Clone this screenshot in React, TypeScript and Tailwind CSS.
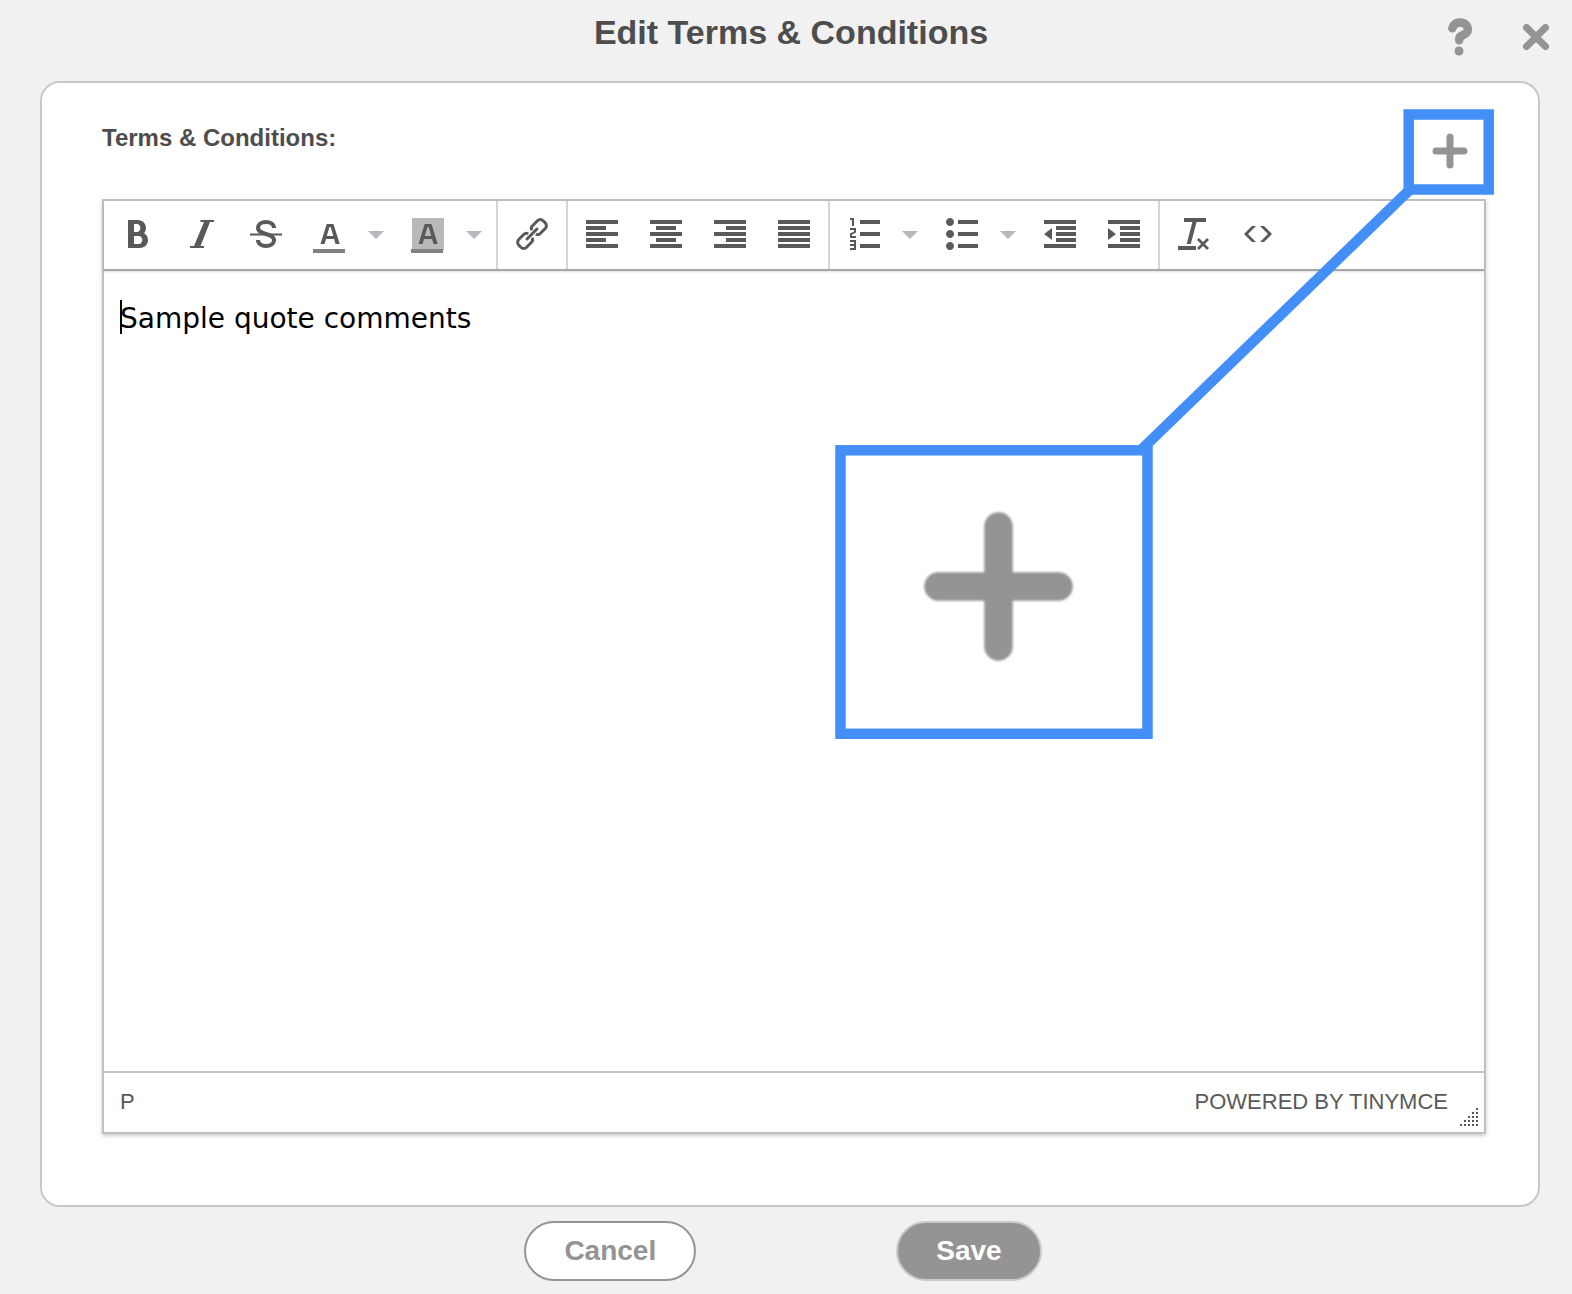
import type { ReactNode } from 'react';
import {
  ImBold,
  ImClearFormatting,
  ImIndentDecrease,
  ImIndentIncrease,
  ImList2,
  ImListNumbered,
  ImParagraphCenter,
  ImParagraphJustify,
  ImParagraphLeft,
  ImParagraphRight,
} from 'react-icons/im';

function ToolGroup({ children, last = false }: { children: ReactNode; last?: boolean }) {
  return (
    <div className={last ? 'flex px-0.5' : 'flex border-r-2 border-[#d4d4d4] px-0.5'}>{children}</div>
  );
}

function Tool({ label, children }: { label: string; children: ReactNode }) {
  return (
    <button
      type="button"
      aria-label={label}
      title={label}
      className="flex w-16 items-center justify-center pb-0.5 text-[32px] text-[#595959]"
    >
      {children}
    </button>
  );
}

function SplitTool({ label, children }: { label: string; children: ReactNode }) {
  return (
    <div className="flex w-[98px]">
      <Tool label={label}>{children}</Tool>
      <button type="button" aria-label={`${label} options`} className="flex grow items-center pl-1.5">
        <svg width="16" height="8" viewBox="0 0 16 8" fill="#b5b8bf" aria-hidden="true">
          <path d="M0 0h16L8 8z" />
        </svg>
      </button>
    </div>
  );
}

function ItalicIcon() {
  return (
    <svg width="32" height="32" viewBox="0 0 32 32" fill="currentColor" aria-hidden="true">
      <path d="M14.500 2H28v2h-4L14.500 28h3.500v2H4v-2h4L18 4h-3.500z" />
    </svg>
  );
}

function StrikeIcon() {
  return (
    <svg width="32" height="32" viewBox="0 0 32 32" fill="none" stroke="currentColor" aria-hidden="true">
      <path
        d="M24 10C24 6.300 20.500 4 16 4S8 6.300 8 10C8 17 24 15 24 22 24 25.700 20.500 28 16 28S8 25.700 8 22"
        strokeWidth="4"
      />
      <path d="M0 16.500h32" strokeWidth="2" />
    </svg>
  );
}

function LinkIcon() {
  return (
    <svg
      width="32"
      height="32"
      viewBox="0 0 32 32"
      fill="none"
      stroke="currentColor"
      strokeWidth="3"
      className="overflow-visible"
      aria-hidden="true"
    >
      <g transform="rotate(-45 16 16)">
        <path d="M18.800 13.300Q19.200 10.500 22.200 10.500H29.200a4 4 0 0 1 4 4v3a4 4 0 0 1-4 4H22.200Q19.200 21.500 18.800 18.700" />
        <path d="M13.200 13.300Q12.800 10.500 9.800 10.500H2.800a4 4 0 0 0-4 4v3a4 4 0 0 0 4 4H9.800Q12.800 21.500 13.200 18.700" />
        <path d="M9 16h14" strokeLinecap="round" />
      </g>
    </svg>
  );
}

function ColorIcon({ filled = false }: { filled?: boolean }) {
  return (
    <svg width="34" height="36" viewBox="0 0 34 36" fill="currentColor" className="mt-1" aria-hidden="true">
      {filled && <path d="M1 0h32v32H1z" fill="#b9b9b9" />}
      <path
        fillRule="evenodd"
        d="M7.500 26 13.700 6h6.800l6.200 20h-4.200l-1.400-5h-8.100l-1.400 5zM13.800 18h6.500L17.600 9h-1.100z"
      />
      <path d="M0 31h32v4H0z" fill="#828282" />
    </svg>
  );
}

function CodeIcon() {
  return (
    <svg width="32" height="32" viewBox="0 0 32 32" fill="currentColor" aria-hidden="true">
      <path d="M10 8 2 16l8 8h4l-8-8 8-8zM22 8h-4l8 8-8 8h4l8-8z" />
    </svg>
  );
}

function ResizeGrip() {
  const dots = [0, 1, 2, 3, 4].flatMap((row) =>
    [0, 1, 2, 3, 4].filter((col) => col >= 4 - row).map((col) => ({ row, col })),
  );
  return (
    <svg width="20" height="20" viewBox="0 0 20 20" fill="#555" aria-hidden="true">
      {dots.map(({ row, col }) => (
        <rect key={`${row}-${col}`} x={col * 4} y={row * 4} width="2" height="2" />
      ))}
    </svg>
  );
}

function Callout() {
  return (
    <svg
      className="pointer-events-none absolute top-[26px] right-11"
      width="659"
      height="630"
      viewBox="0 0 659 630"
      fill="none"
      aria-hidden="true"
    >
      <rect x="5.500" y="341.500" width="307" height="283.500" fill="#fff" />
      <g stroke="#448ff7" strokeWidth="10.500">
        <rect x="573.700" y="5.500" width="80" height="75" />
        <path d="M306 341 574 81.500" />
        <rect x="5.500" y="341.300" width="307" height="283.500" />
      </g>
      <path
        d="M103.500 477.500h120M163.500 417.500v120"
        stroke="#959393"
        strokeWidth="28.500"
        strokeLinecap="round"
        className="blur-[1px]"
      />
    </svg>
  );
}

export default function App() {
  return (
    <div className="flex min-h-screen flex-col bg-[#f1f1f1] font-['Liberation_Sans',Arial,sans-serif]">
      <header className="grid h-[81px] grid-cols-[1fr_auto_1fr] items-start pr-[22px] pl-8">
        <h1 className="col-start-2 pt-3 text-[34px] leading-10 font-bold text-[#4d4d4d]">
          Edit Terms &amp; Conditions
        </h1>
        <div className="flex items-start justify-end gap-12 pt-4 text-[#959393]">
          <button type="button" aria-label="Help">
            <svg width="28" height="40" viewBox="0 0 28 40" fill="none" aria-hidden="true">
              <path
                d="M6.300 12.300C7.500 8.500 10 6.600 14 6.600C18.500 6.600 21.800 9.500 21.800 13.500C21.800 18 18 18.500 15 20C13.400 20.900 13.200 22 13.200 24.200"
                stroke="currentColor"
                strokeWidth="8.500"
                strokeLinecap="round"
              />
              <circle cx="13" cy="35" r="4.500" fill="currentColor" />
            </svg>
          </button>
          <button type="button" aria-label="Close" className="pt-[7px]">
            <svg width="28" height="28" viewBox="0 0 28 28" fill="none" aria-hidden="true">
              <path
                d="M4.500 4.500 23.500 23.500M23.500 4.500 4.500 23.500"
                stroke="currentColor"
                strokeWidth="7"
                strokeLinecap="round"
              />
            </svg>
          </button>
        </div>
      </header>

      <main className="relative mr-8 ml-10 flex grow flex-col rounded-[20px] border-2 border-[#c9c9c9] bg-white pr-[52px] pb-[71px] pl-[60px]">
        <div className="flex h-[116px] items-start justify-between">
          <label htmlFor="terms" className="pt-[39px] text-2xl leading-8 font-bold text-[#4d4d4d]">
            Terms &amp; Conditions:
          </label>
          <button type="button" aria-label="Add" className="mt-[50px] mr-[18px] text-[#959393]">
            <svg width="36" height="36" viewBox="0 0 36 36" fill="none" aria-hidden="true">
              <path
                d="M4 18h28M18 4v28"
                stroke="currentColor"
                strokeWidth="7"
                strokeLinecap="round"
              />
            </svg>
          </button>
        </div>

        <section className="flex grow flex-col border-2 border-[#c0c0c0] bg-white shadow-[0_2px_4px_rgba(0,0,0,0.2)]">
          <div role="toolbar" aria-label="Formatting" className="flex h-[70px] border-b-2 border-[#a6a6a6] shadow-sm">
            <ToolGroup>
              <Tool label="Bold"><ImBold /></Tool>
              <Tool label="Italic"><ItalicIcon /></Tool>
              <Tool label="Strikethrough"><StrikeIcon /></Tool>
              <SplitTool label="Text color"><ColorIcon /></SplitTool>
              <SplitTool label="Background color"><ColorIcon filled /></SplitTool>
            </ToolGroup>
            <ToolGroup>
              <Tool label="Insert link"><LinkIcon /></Tool>
            </ToolGroup>
            <ToolGroup>
              <Tool label="Align left"><ImParagraphLeft /></Tool>
              <Tool label="Align center"><ImParagraphCenter /></Tool>
              <Tool label="Align right"><ImParagraphRight /></Tool>
              <Tool label="Justify"><ImParagraphJustify /></Tool>
            </ToolGroup>
            <ToolGroup>
              <SplitTool label="Numbered list"><ImListNumbered /></SplitTool>
              <SplitTool label="Bullet list"><ImList2 /></SplitTool>
              <Tool label="Decrease indent"><ImIndentDecrease /></Tool>
              <Tool label="Increase indent"><ImIndentIncrease /></Tool>
            </ToolGroup>
            <ToolGroup last>
              <Tool label="Clear formatting"><ImClearFormatting /></Tool>
              <Tool label="Source code"><CodeIcon /></Tool>
            </ToolGroup>
          </div>

          <div className="relative flex grow">
            <span className="absolute top-[29px] left-4 h-[34px] w-0.5 bg-black" aria-hidden="true" />
            <textarea
              id="terms"
              defaultValue="Sample quote comments"
              className="grow resize-none px-4 pt-[30px] font-['DejaVu_Sans',Verdana,sans-serif] text-[28px] leading-9 text-black outline-none"
            />
          </div>

          <div className="flex h-[61px] justify-between border-t-2 border-[#c4c4c4] pl-4 text-[22px] leading-[58px] text-[#595959]">
            <span>P</span>
            <div className="flex gap-3 pr-1">
              <a href="#tinymce">POWERED BY TINYMCE</a>
              <div className="self-end pb-1"><ResizeGrip /></div>
            </div>
          </div>
        </section>

        <Callout />
      </main>

      <footer className="flex justify-center gap-[200px] pt-3.5 pr-1.5 pb-[13px]">
        <button
          type="button"
          className="h-[60px] rounded-full border-2 border-[#959393] bg-white px-[38px] text-[28px] leading-8 font-bold text-[#959393]"
        >
          Cancel
        </button>
        <button
          type="button"
          className="h-[60px] rounded-full border-2 border-[#c9c9c9] bg-[#959393] px-[38px] text-[28px] leading-8 font-bold text-white"
        >
          Save
        </button>
      </footer>
    </div>
  );
}
